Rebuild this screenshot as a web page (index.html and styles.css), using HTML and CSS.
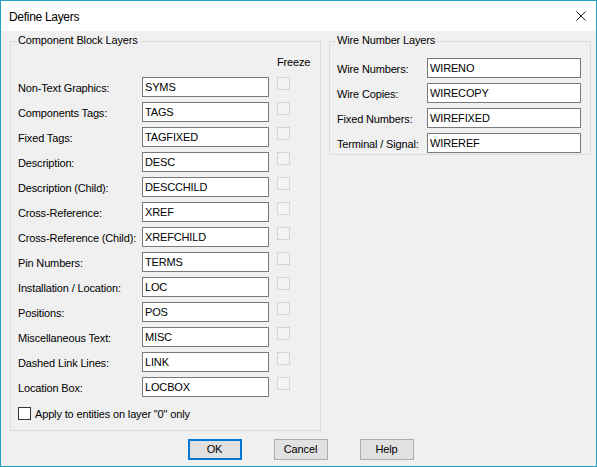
FILE: index.html
```html
<!DOCTYPE html>
<html>
<head>
<meta charset="utf-8">
<link rel="stylesheet" href="styles.css">
</head>
<body>
<div class="window">
  <div class="titlebar">
    <span class="title">Define Layers</span>
    <svg class="close" width="10" height="10" viewBox="0 0 10 10"><path d="M0.5 0.5 L9.5 9.5 M9.5 0.5 L0.5 9.5" stroke="#1a1a1a" stroke-width="1" fill="none"/></svg>
  </div>
  <div class="content">
    <div class="groups">
      <div class="group group-left">
        <span class="legend">Component Block Layers</span>
        <div class="freeze-head">Freeze</div>
        <div class="rows">
          <div class="row"><span class="label">Non-Text Graphics:</span><span class="input">SYMS</span><span class="cb-disabled"></span></div>
          <div class="row"><span class="label">Components Tags:</span><span class="input">TAGS</span><span class="cb-disabled"></span></div>
          <div class="row"><span class="label">Fixed Tags:</span><span class="input">TAGFIXED</span><span class="cb-disabled"></span></div>
          <div class="row"><span class="label">Description:</span><span class="input">DESC</span><span class="cb-disabled"></span></div>
          <div class="row"><span class="label">Description (Child):</span><span class="input">DESCCHILD</span><span class="cb-disabled"></span></div>
          <div class="row"><span class="label">Cross-Reference:</span><span class="input">XREF</span><span class="cb-disabled"></span></div>
          <div class="row"><span class="label">Cross-Reference (Child):</span><span class="input">XREFCHILD</span><span class="cb-disabled"></span></div>
          <div class="row"><span class="label">Pin Numbers:</span><span class="input">TERMS</span><span class="cb-disabled"></span></div>
          <div class="row"><span class="label">Installation / Location:</span><span class="input">LOC</span><span class="cb-disabled"></span></div>
          <div class="row"><span class="label">Positions:</span><span class="input">POS</span><span class="cb-disabled"></span></div>
          <div class="row"><span class="label">Miscellaneous Text:</span><span class="input">MISC</span><span class="cb-disabled"></span></div>
          <div class="row"><span class="label">Dashed Link Lines:</span><span class="input">LINK</span><span class="cb-disabled"></span></div>
          <div class="row"><span class="label">Location Box:</span><span class="input">LOCBOX</span><span class="cb-disabled"></span></div>
        </div>
        <div class="apply"><span class="cb"></span><span class="apply-text">Apply to entities on layer "0" only</span></div>
      </div>
      <div class="group group-right">
        <span class="legend">Wire Number Layers</span>
        <div class="rows">
          <div class="row"><span class="label label-r">Wire Numbers:</span><span class="input input-r">WIRENO</span></div>
          <div class="row"><span class="label label-r">Wire Copies:</span><span class="input input-r">WIRECOPY</span></div>
          <div class="row"><span class="label label-r">Fixed Numbers:</span><span class="input input-r">WIREFIXED</span></div>
          <div class="row"><span class="label label-r">Terminal / Signal:</span><span class="input input-r">WIREREF</span></div>
        </div>
      </div>
    </div>
    <div class="buttons">
      <span class="btn btn-default">OK</span>
      <span class="btn">Cancel</span>
      <span class="btn">Help</span>
    </div>
  </div>
</div>
</body>
</html>
```

FILE: styles.css
```css
html, body {
  margin: 0;
  padding: 0;
  background: #f0f0f0;
}
.window {
  width: 597px;
  height: 467px;
  box-sizing: border-box;
  border: 1px solid #23a0be;
  background: #f0f0f0;
  display: flex;
  flex-direction: column;
  font-family: "Liberation Sans", Arial, sans-serif;
  font-size: 11px;
  letter-spacing: -0.15px;
  color: #000;
}
.titlebar {
  height: 30px;
  background: #ffffff;
  display: flex;
  align-items: center;
  justify-content: space-between;
  padding: 0 10px 0 8px;
  flex: none;
}
.title {
  font-size: 12px;
  letter-spacing: -0.3px;
  padding-top: 1px;
}
.close {
  display: block;
  margin-top: 0px;
}
.content {
  flex: 1;
  display: flex;
  flex-direction: column;
  padding: 10px 5px 0 9px;
}
.groups {
  display: flex;
  align-items: flex-start;
  gap: 8px;
}
.group {
  position: relative;
  border: 1px solid #dcdcdc;
  box-sizing: border-box;
}
.legend {
  position: absolute;
  top: -8px;
  left: 6px;
  padding: 0 1px;
  line-height: 13px;
  background: #f0f0f0;
}
.group-left {
  width: 311px;
  padding: 14px 0 10px 7px;
}
.group-right {
  width: 262px;
  padding: 16px 0 1px 7px;
}
.freeze-head {
  line-height: 13px;
  padding-left: 259px;
  margin-bottom: 8px;
}
.rows {
  display: flex;
  flex-direction: column;
  gap: 5px;
}
.row {
  display: flex;
  align-items: flex-start;
  height: 20px;
}
.label {
  width: 124px;
  flex: none;
  line-height: 20px;
  padding-top: 1px;
  white-space: nowrap;
}
.label-r {
  width: 90px;
}
.input {
  width: 127px;
  height: 20px;
  box-sizing: border-box;
  flex: none;
  border: 1px solid #7a7a7a;
  background: #ffffff;
  padding: 0 2px;
  line-height: 18px;
  white-space: nowrap;
}
.input-r {
  width: 154px;
}
.cb-disabled {
  width: 13px;
  height: 13px;
  box-sizing: border-box;
  flex: none;
  margin-left: 8px;
  border: 1px solid #d4d4d4;
  background: #f4f4f4;
}
.apply {
  display: flex;
  align-items: center;
  margin-top: 10px;
  height: 13px;
}
.cb {
  width: 13px;
  height: 13px;
  box-sizing: border-box;
  border: 1px solid #333333;
  background: #ffffff;
  flex: none;
}
.apply-text {
  margin-left: 4px;
  line-height: 13px;
  padding-top: 1px;
}
.buttons {
  display: flex;
  justify-content: center;
  gap: 32px;
  margin-top: 8px;
  padding-right: 0;
}
.btn {
  width: 54px;
  height: 21px;
  box-sizing: border-box;
  border: 1px solid #adadad;
  background: #e1e1e1;
  display: flex;
  align-items: center;
  justify-content: center;
  line-height: 13px;
}
.btn-default {
  border: 2px solid #0078d7;
}
```
